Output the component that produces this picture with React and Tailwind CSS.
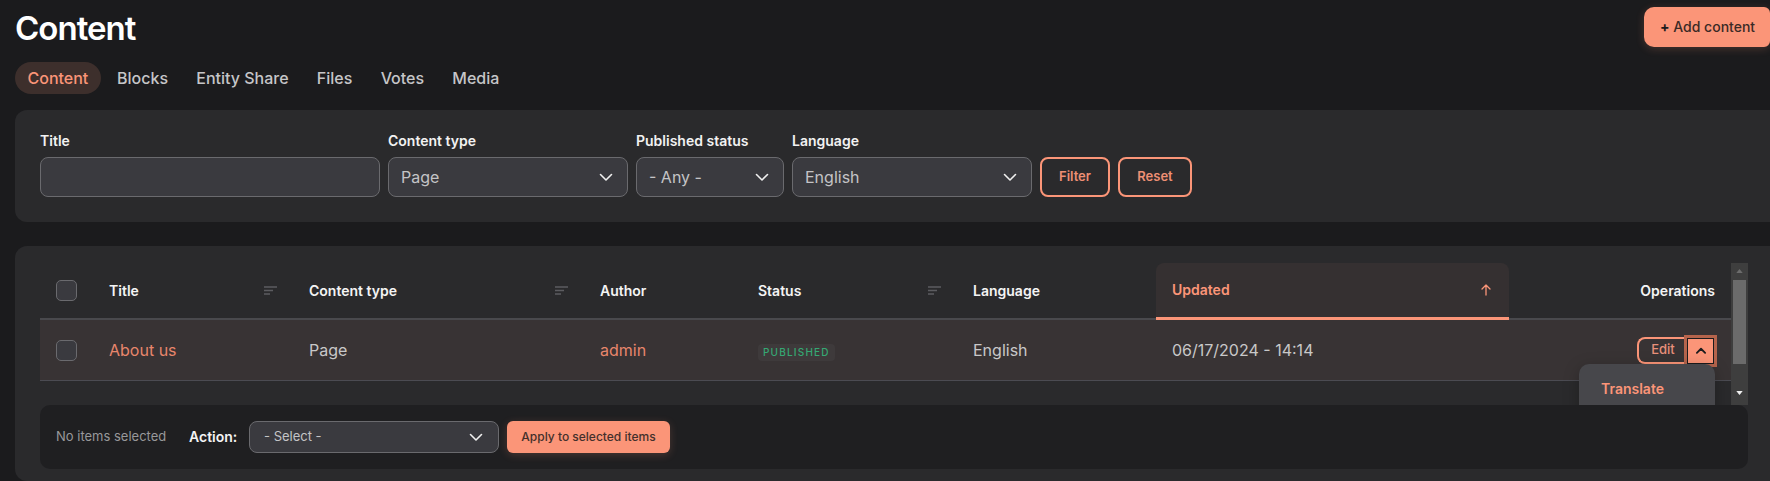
const Chevron = ({ className = "", sw = 1.6 }) => (
  <svg viewBox="0 0 16 16" className={className} fill="none" stroke="currentColor" strokeWidth={sw} strokeLinecap="round" strokeLinejoin="round">
    <polyline points="2.5,5.5 8,11 13.5,5.5" />
  </svg>
);

const SortIcon = () => (
  <svg viewBox="0 0 13 9" className="h-[9px] w-[13px]" fill="none" stroke="#5c5c60" strokeWidth="1.4">
    <path d="M0 1h13M0 4.5h9M0 8h6" />
  </svg>
);

const Select = ({ label, value, w }) => (
  <div className={`flex flex-col ${w}`}>
    <label className="mb-[6px] text-sm leading-5 font-semibold text-[#f2f2f2]">{label}</label>
    <div className="flex h-10 items-center justify-between rounded-lg border border-[#6a6a6e] bg-[#3a3a3f] pr-[13px] pl-3 text-base text-[#c4c4c6]">
      <span>{value}</span>
      <Chevron className="h-4 w-4 text-[#f0f0f0]" />
    </div>
  </div>
);

const Th = ({ w, children, sort }) => (
  <th className={`${w} h-[57px] border-b-2 border-[#49494d] px-4 text-left text-sm font-semibold text-[#f4f4f4]`}>
    <div className="flex items-center justify-between">
      <span>{children}</span>
      {sort && <SortIcon />}
    </div>
  </th>
);

const Td = ({ children }) => (
  <td className="h-[61px] border-b border-[#4b4b52] bg-[#383334] px-4 text-base text-[#c8c8c8]">{children}</td>
);

const Checkbox = () => <div className="h-[21px] w-[21px] rounded-[5px] border border-[#6a6a6e] bg-[#3a3a3f]" />;

export default function App() {
  return (
    <div className="h-[481px] w-[1770px] overflow-hidden bg-[#1b1b1d] pl-[15px] font-['Inter',sans-serif]">
      <div className="flex h-[54px] items-start justify-between">
        <h1 className="mt-[8px] text-[33px] leading-10 font-semibold tracking-[-0.03em] text-white">Content</h1>
        <button className="mt-[7px] h-10 w-[126px] rounded-l-[10px] rounded-r-[6px] bg-[#fb9578] pl-4 text-left text-sm font-medium text-[#3a2a26] shadow-[0_2px_8px_rgba(251,149,120,0.2)]">
          <span className="font-bold text-[#1b1b1d]">+</span> Add content
        </button>
      </div>

      <nav className="mt-2 flex h-8 items-center gap-[4.25px] text-base font-medium text-[#c6c6c8]">
        <a className="flex h-8 items-center rounded-2xl bg-[#3d2f2c] px-[12.5px] text-[#fb9578]">Content</a>
        <a className="px-3">Blocks</a>
        <a className="px-3">Entity Share</a>
        <a className="px-3">Files</a>
        <a className="px-3">Votes</a>
        <a className="px-3">Media</a>
      </nav>

      <section className="mt-4 flex h-28 items-start gap-2 rounded-l-xl bg-[#2a2a2c] pt-[21px] pl-[25px]">
        <div className="flex w-[340px] flex-col">
          <label className="mb-[6px] text-sm leading-5 font-semibold text-[#f2f2f2]">Title</label>
          <div className="h-10 rounded-lg border border-[#6a6a6e] bg-[#3a3a3f]" />
        </div>
        <Select label="Content type" value="Page" w="w-[240px]" />
        <Select label="Published status" value="- Any -" w="w-[148px]" />
        <Select label="Language" value="English" w="w-[240px]" />
        <button className="mt-[26px] h-10 w-[70px] rounded-lg border-2 border-[#fb9578] text-[13px] font-semibold text-[#ee8f74]">Filter</button>
        <button className="mt-[26px] h-10 w-[74px] rounded-lg border-2 border-[#fb9578] text-[13px] font-semibold text-[#ee8f74]">Reset</button>
      </section>

      <section className="mt-6 h-[235px] rounded-l-xl bg-[#2a2a2c] pt-[17px] pr-[22px] pl-[25px]">
        <div className="relative flex h-[142px] items-start overflow-hidden">
          <table className="w-[1691px] table-fixed border-separate border-spacing-0">
            <thead>
              <tr>
                <th className="h-[57px] w-[53px] border-b-2 border-[#49494d] pl-4 text-left"><Checkbox /></th>
                <Th w="w-[200px]" sort>Title</Th>
                <Th w="w-[291px]" sort>Content type</Th>
                <Th w="w-[158px]">Author</Th>
                <Th w="w-[215px]" sort>Status</Th>
                <Th w="w-[199px]">Language</Th>
                <th className="h-[57px] w-[353px] rounded-t-lg border-b-[3px] border-[#fb9578] bg-[#353031] px-4 text-left text-sm font-semibold text-[#fb9578]">
                  <div className="flex items-center justify-between">
                    <span>Updated</span>
                    <svg viewBox="0 0 12 12" className="mr-px h-3 w-3" fill="none" stroke="#fb9578" strokeWidth="1.3" strokeLinecap="round" strokeLinejoin="round">
                      <path d="M6 11V1M2 5l4-4 4 4" />
                    </svg>
                  </div>
                </th>
                <th className="h-[57px] w-[222px] border-b-2 border-[#49494d] px-4 text-right text-sm font-semibold text-[#f4f4f4]">Operations</th>
              </tr>
            </thead>
            <tbody>
              <tr>
                <td className="h-[61px] border-b border-[#4b4b52] bg-[#383334] pl-4"><Checkbox /></td>
                <Td><a className="text-[#e8866c]">About us</a></Td>
                <Td>Page</Td>
                <Td><a className="text-[#e8866c]">admin</a></Td>
                <Td>
                  <span className="inline-flex h-[17px] items-center rounded-[4px] bg-[#3e3a3b] px-[5px] text-[10px] font-medium tracking-[0.12em] text-[#35a873]">PUBLISHED</span>
                </Td>
                <Td>English</Td>
                <Td>06/17/2024 - 14:14</Td>
                <td className="h-[61px] border-b border-[#4b4b52] bg-[#383334] px-4">
                  <div className="relative mr-px flex items-start justify-end">
                    <a className="flex h-[27px] w-[50px] items-center justify-center rounded-l-lg border-2 border-r-0 border-[#fb9578] text-[13px] font-medium text-[#e8907a]">Edit</a>
                    <button className="mt-px flex h-[26px] w-[27px] items-center justify-center border border-[#1b1b1d] bg-[#fb9578] text-[#1b1b1d] ring-[3px] ring-[#b5644c]">
                      <Chevron className="h-3 w-3 rotate-180" sw={2.4} />
                    </button>
                    <div className="absolute top-[27px] -right-px z-10 h-[60px] w-[136px] rounded-t-[10px] bg-[#47474b] pt-[15px] pl-[22px] text-sm font-semibold text-[#fb9578] shadow-[0_4px_16px_rgba(0,0,0,0.25)]">Translate</div>
                  </div>
                </td>
              </tr>
            </tbody>
          </table>
          <div className="flex h-[142px] w-[17px] flex-col items-center bg-[#3e3e3e]">
            <svg viewBox="0 0 8 5" className="mt-[6px] h-[4px] w-[7px]" fill="#6c6c6c"><path d="M4 0l4 5H0z" /></svg>
            <div className="mt-[7px] h-[84px] w-[13px] bg-[#6b6b6b]" />
            <svg viewBox="0 0 8 5" className="mt-[27px] h-[4px] w-[7px]" fill="#f0f0f0"><path d="M4 5L0 0h8z" /></svg>
          </div>
        </div>

        <div className="flex h-16 items-center rounded-[10px] bg-[#1f1f21] pl-4">
          <span className="w-[133px] text-[13px] text-[#98989a]">No items selected</span>
          <span className="w-[60px] text-sm font-semibold text-[#f4f4f4]">Action:</span>
          <div className="flex h-8 w-[250px] items-center justify-between rounded-lg border border-[#6a6a6e] bg-[#3a3a3f] pr-[14px] pl-[14px] text-[13px] text-[#c4c4c6]">
            <span>- Select -</span>
            <Chevron className="h-4 w-4 text-[#f0f0f0]" />
          </div>
          <button className="ml-2 h-8 w-[163px] rounded-md bg-[#fb9578] text-xs font-medium text-[#43302b] shadow-[0_2px_8px_rgba(251,149,120,0.2)]">Apply to selected items</button>
        </div>
      </section>
    </div>
  );
}
